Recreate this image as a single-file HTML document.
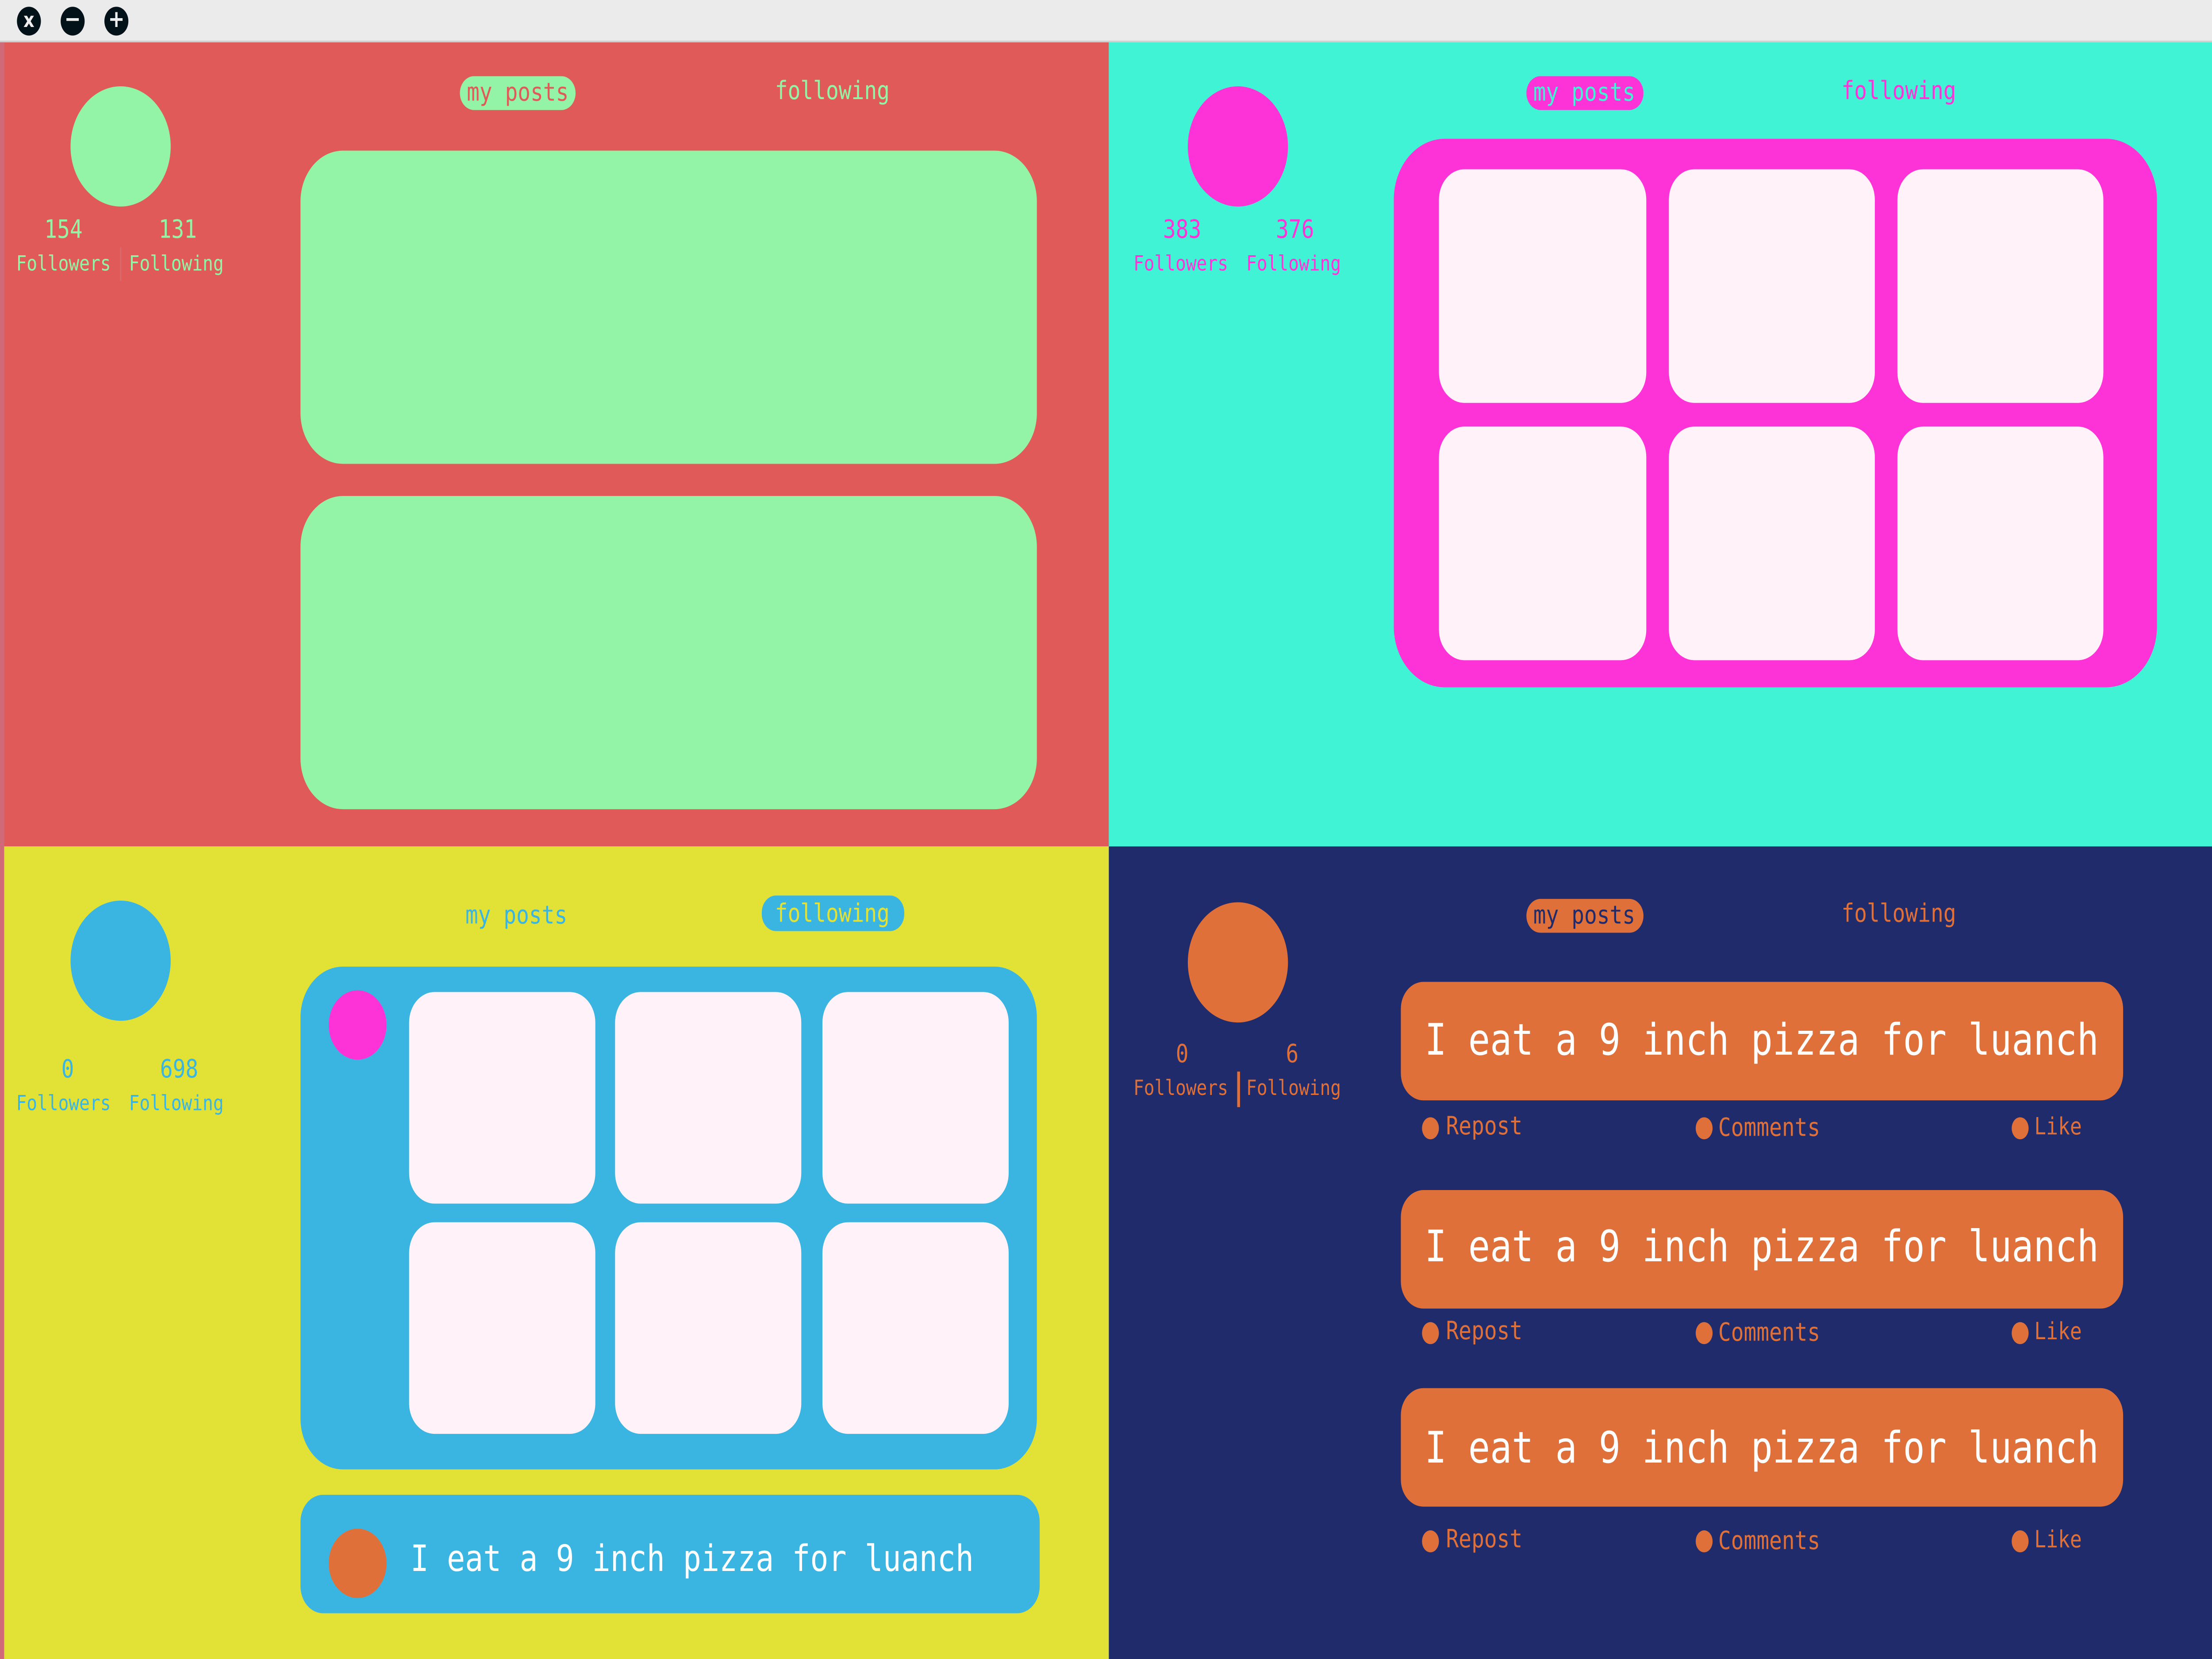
<!DOCTYPE html>
<html><head><meta charset="utf-8"><style>
html,body{margin:0;padding:0;width:100%;height:100%;overflow:hidden;background:#ebebeb;}
#w{position:absolute;left:0;top:0;width:1568px;height:980px;transform:scale(3.82653);transform-origin:0 0;font-family:"DejaVu Sans Mono","Liberation Mono",monospace;}
#w div{position:absolute;box-sizing:border-box;}
.c{border-radius:50%;}
.t{white-space:nowrap;line-height:1;}
.ctr{transform:translate(-50%,-50%);}
.tile{background:#fff2f8;border-radius:18px;}
</style></head><body><div id="w">
<div style="left:0;top:0;width:1568px;height:25px;background:#ebebeb;border-bottom:1px solid #d0d0d0"></div>
<div class="c" style="left:12px;top:4px;width:17px;height:17px;background:#031219;color:#eee;font:bold 12px 'DejaVu Sans',sans-serif;text-align:center;line-height:16px">x</div>
<div class="c" style="left:43px;top:4px;width:17px;height:17px;background:#031219;color:#eee;font:bold 14px 'DejaVu Sans',sans-serif;text-align:center;line-height:16px">−</div>
<div class="c" style="left:74px;top:4px;width:17px;height:17px;background:#031219;color:#eee;font:bold 14px 'DejaVu Sans',sans-serif;text-align:center;line-height:16px">+</div>

<div style="left:0;top:25px;width:786px;height:475px;background:#e15a5a"></div>
<div style="left:0;top:25px;width:3px;height:955px;background:#d06a78"></div>
<div class="c" style="left:50px;top:51px;width:71px;height:71px;background:#93f4a7"></div>
<div class="t ctr" style="left:45px;top:136px;font-size:15px;color:#93f4a7">154</div>
<div class="t ctr" style="left:126px;top:136px;font-size:15px;color:#93f4a7">131</div>
<div class="t ctr" style="left:45px;top:156px;font-size:12.4px;color:#93f4a7">Followers</div>
<div class="t ctr" style="left:125px;top:156px;font-size:12.4px;color:#93f4a7">Following</div>
<div style="left:85px;top:146px;width:1px;height:20px;background:#d56a6a"></div>
<div style="left:326px;top:45px;width:82px;height:20px;border-radius:10px;background:#93f4a7"></div>
<div class="t ctr" style="left:367px;top:55px;font-size:15px;color:#e15a5a">my posts</div>
<div class="t ctr" style="left:590px;top:54px;font-size:15px;color:#93f4a7">following</div>
<div style="left:213px;top:89px;width:522px;height:185px;border-radius:30px;background:#93f4a7"></div>
<div style="left:213px;top:293px;width:522px;height:185px;border-radius:30px;background:#93f4a7"></div>

<div style="left:786px;top:25px;width:782px;height:475px;background:#40f3d4"></div>
<div class="c" style="left:842px;top:51px;width:71px;height:71px;background:#fd33d8"></div>
<div class="t ctr" style="left:838px;top:136px;font-size:15px;color:#fd33d8">383</div>
<div class="t ctr" style="left:918px;top:136px;font-size:15px;color:#fd33d8">376</div>
<div class="t ctr" style="left:837px;top:156px;font-size:12.4px;color:#fd33d8">Followers</div>
<div class="t ctr" style="left:917px;top:156px;font-size:12.4px;color:#fd33d8">Following</div>
<div style="left:1082px;top:45px;width:83px;height:20px;border-radius:10px;background:#fd33d8"></div>
<div class="t ctr" style="left:1123px;top:55px;font-size:15px;color:#40f3d4">my posts</div>
<div class="t ctr" style="left:1346px;top:54px;font-size:15px;color:#fd33d8">following</div>
<div style="left:988px;top:82px;width:541px;height:324px;border-radius:36px;background:#fd33d8"></div>
<div class="tile" style="left:1020px;top:100px;width:147px;height:138px"></div>
<div class="tile" style="left:1183px;top:100px;width:146px;height:138px"></div>
<div class="tile" style="left:1345px;top:100px;width:146px;height:138px"></div>
<div class="tile" style="left:1020px;top:252px;width:147px;height:138px"></div>
<div class="tile" style="left:1183px;top:252px;width:146px;height:138px"></div>
<div class="tile" style="left:1345px;top:252px;width:146px;height:138px"></div>

<div style="left:3px;top:500px;width:783px;height:480px;background:#e2e236"></div>
<div class="c" style="left:50px;top:532px;width:71px;height:71px;background:#3ab5e2"></div>
<div class="t ctr" style="left:48px;top:632px;font-size:15px;color:#3ab5e2">0</div>
<div class="t ctr" style="left:127px;top:632px;font-size:15px;color:#3ab5e2">698</div>
<div class="t ctr" style="left:45px;top:652px;font-size:12.4px;color:#3ab5e2">Followers</div>
<div class="t ctr" style="left:125px;top:652px;font-size:12.4px;color:#3ab5e2">Following</div>
<div class="t ctr" style="left:366px;top:541px;font-size:15px;color:#3ab5e2">my posts</div>
<div style="left:540px;top:529px;width:101px;height:21px;border-radius:10px;background:#3ab5e2"></div>
<div class="t ctr" style="left:590px;top:540px;font-size:15px;color:#e2e236">following</div>
<div style="left:213px;top:571px;width:522px;height:297px;border-radius:30px;background:#3ab5e2"></div>
<div class="c" style="left:233px;top:585px;width:41px;height:41px;background:#fd33d8"></div>
<div class="tile" style="left:290px;top:586px;width:132px;height:125px"></div>
<div class="tile" style="left:436px;top:586px;width:132px;height:125px"></div>
<div class="tile" style="left:583px;top:586px;width:132px;height:125px"></div>
<div class="tile" style="left:290px;top:722px;width:132px;height:125px"></div>
<div class="tile" style="left:436px;top:722px;width:132px;height:125px"></div>
<div class="tile" style="left:583px;top:722px;width:132px;height:125px"></div>
<div style="left:213px;top:883px;width:524px;height:70px;border-radius:16px;background:#3ab5e2"></div>
<div class="c" style="left:233px;top:903px;width:41px;height:41px;background:#df703a"></div>
<div class="t" style="left:291px;top:911px;font-size:21.4px;color:#fff">I eat a 9 inch pizza for luanch</div>

<div style="left:786px;top:500px;width:782px;height:480px;background:#1f2b6b"></div>
<div class="c" style="left:842px;top:533px;width:71px;height:71px;background:#df703a"></div>
<div class="t ctr" style="left:838px;top:623px;font-size:15px;color:#df703a">0</div>
<div class="t ctr" style="left:916px;top:623px;font-size:15px;color:#df703a">6</div>
<div class="t ctr" style="left:837px;top:643px;font-size:12.4px;color:#df703a">Followers</div>
<div class="t ctr" style="left:917px;top:643px;font-size:12.4px;color:#df703a">Following</div>
<div style="left:877px;top:633px;width:1.5px;height:21px;background:#df703a"></div>
<div style="left:1082px;top:531px;width:83px;height:20px;border-radius:10px;background:#df703a"></div>
<div class="t ctr" style="left:1123px;top:541px;font-size:15px;color:#1f2b6b">my posts</div>
<div class="t ctr" style="left:1346px;top:540px;font-size:15px;color:#df703a">following</div>

<div style="left:993px;top:580px;width:512px;height:70px;border-radius:16px;background:#df703a"></div>
<div class="t" style="left:1010px;top:603px;font-size:25.6px;color:#fff">I eat a 9 inch pizza for luanch</div>
<div class="c" style="left:1008px;top:660px;width:12px;height:13px;background:#df703a"></div>
<div class="t" style="left:1025px;top:658px;font-size:15px;color:#df703a">Repost</div>
<div class="c" style="left:1202px;top:660px;width:12px;height:13px;background:#df703a"></div>
<div class="t" style="left:1218px;top:659px;font-size:15px;color:#df703a">Comments</div>
<div class="c" style="left:1426px;top:660px;width:12px;height:13px;background:#df703a"></div>
<div class="t" style="left:1442px;top:659px;font-size:14px;color:#df703a">Like</div>

<div style="left:993px;top:703px;width:512px;height:70px;border-radius:16px;background:#df703a"></div>
<div class="t" style="left:1010px;top:725px;font-size:25.6px;color:#fff">I eat a 9 inch pizza for luanch</div>
<div class="c" style="left:1008px;top:781px;width:12px;height:13px;background:#df703a"></div>
<div class="t" style="left:1025px;top:779px;font-size:15px;color:#df703a">Repost</div>
<div class="c" style="left:1202px;top:781px;width:12px;height:13px;background:#df703a"></div>
<div class="t" style="left:1218px;top:780px;font-size:15px;color:#df703a">Comments</div>
<div class="c" style="left:1426px;top:781px;width:12px;height:13px;background:#df703a"></div>
<div class="t" style="left:1442px;top:780px;font-size:14px;color:#df703a">Like</div>

<div style="left:993px;top:820px;width:512px;height:70px;border-radius:16px;background:#df703a"></div>
<div class="t" style="left:1010px;top:844px;font-size:25.6px;color:#fff">I eat a 9 inch pizza for luanch</div>
<div class="c" style="left:1008px;top:904px;width:12px;height:13px;background:#df703a"></div>
<div class="t" style="left:1025px;top:902px;font-size:15px;color:#df703a">Repost</div>
<div class="c" style="left:1202px;top:904px;width:12px;height:13px;background:#df703a"></div>
<div class="t" style="left:1218px;top:903px;font-size:15px;color:#df703a">Comments</div>
<div class="c" style="left:1426px;top:904px;width:12px;height:13px;background:#df703a"></div>
<div class="t" style="left:1442px;top:903px;font-size:14px;color:#df703a">Like</div>
</div>
<script>
(function(){var w=document.getElementById('w');function f(){var sx=window.innerWidth/1568,sy=window.innerHeight/980;if(sx>0&&sy>0)w.style.transform='scale('+sx+','+sy+')';}f();window.addEventListener('resize',f);})();
</script>
</body></html>
